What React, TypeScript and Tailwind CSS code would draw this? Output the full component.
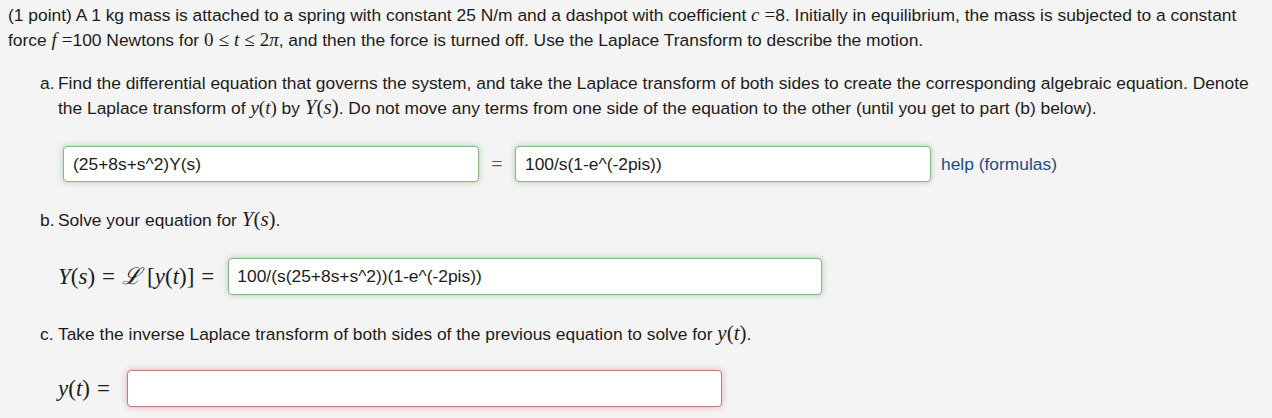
import React from "react";

const serif = '"Liberation Serif", "DejaVu Serif", serif';

const M = ({ children, size = 19 }: { children: React.ReactNode; size?: number }) => (
  <span className="leading-none whitespace-nowrap" style={{ fontFamily: serif, fontSize: size }}>
    {children}
  </span>
);
const I = ({ children }: { children: React.ReactNode }) => <i className="italic">{children}</i>;
const R = ({ children }: { children: React.ReactNode }) => <span className="mx-[5px]">{children}</span>;
const R6 = ({ children }: { children: React.ReactNode }) => <span className="mx-[7px]">{children}</span>;

const inputGreen =
  "h-[36px] bg-white border border-[#84b884] rounded-[4px] shadow-[0_0_6px_rgba(80,160,80,0.45)] flex items-center";

export default function App() {
  return (
    <div
      className="w-[1272px] h-[418px] bg-[#f4f4f4] text-[#1c1c1c] text-[17.4px] leading-[24.5px] overflow-hidden"
      style={{ fontFamily: '"Liberation Sans", Arial, sans-serif' }}
    >
      <div className="pl-[8px] pt-[3px] pr-[10px]">
        <p>
          (1 point) A 1 kg mass is attached to a spring with constant 25 N/m and a dashpot with coefficient{" "}
          <M>
            <I>c</I>
            <span className="ml-[5px]">=</span>
          </M>
          8. Initially in equilibrium, the mass is subjected to a constant force{" "}
          <M>
            <I>f</I>
            <span className="ml-[5px]">=</span>
          </M>
          100 Newtons for{" "}
          <M>
            0<R>≤</R>
            <I>t</I>
            <R>≤</R>2<I>π</I>
          </M>
          , and then the force is turned off. Use the Laplace Transform to describe the motion.
        </p>
      </div>

      <div className="pl-[40px] mt-[19px] pr-[10px]">
        <div className="flex">
          <span className="w-[18px] shrink-0">a.</span>
          <p>
            Find the differential equation that governs the system, and take the Laplace transform of both sides to
            create the corresponding algebraic equation. Denote the Laplace transform of{" "}
            <M>
              <I>y</I>(<I>t</I>)
            </M>{" "}
            by{" "}
            <M size={21}>
              <I>Y</I>(<I>s</I>)
            </M>
            . Do not move any terms from one side of the equation to the other (until you get to part (b) below).
          </p>
        </div>

        <div className="flex items-center mt-[26px] pl-[23px]">
          <div className={`w-[416px] pl-[9px] ${inputGreen}`}>(25+8s+s^2)Y(s)</div>
          <span className="w-[36px] text-center text-[20px] text-[#555]" style={{ fontFamily: serif }}>
            =
          </span>
          <div className={`w-[416px] pl-[9px] ${inputGreen}`}>100/s(1-e^(-2pis))</div>
          <span className="ml-[10px] text-[#1f4a87]">help (formulas)</span>
        </div>

        <div className="flex mt-[26px]">
          <span className="w-[18px] shrink-0">b.</span>
          <p>
            Solve your equation for{" "}
            <M size={21}>
              <I>Y</I>(<I>s</I>)
            </M>
            .
          </p>
        </div>

        <div className="flex items-center mt-[25px] pl-[18px]">
          <M size={23}>
            <I>Y</I>(<I>s</I>)<R6>=</R6>
            <span style={{ fontFamily: '"DejaVu Serif", serif' }} className="italic">
              ℒ
            </span>
            <span className="ml-[6px]">[</span>
            <I>y</I>(<I>t</I>)]<R6>=</R6>
          </M>
          <div className={`ml-[7px] w-[594px] h-[37px] pl-[8px] ${inputGreen}`}>100/(s(25+8s+s^2))(1-e^(-2pis))</div>
        </div>

        <div className="flex mt-[27px]">
          <span className="w-[18px] shrink-0">c.</span>
          <p>
            Take the inverse Laplace transform of both sides of the previous equation to solve for{" "}
            <M size={21}>
              <I>y</I>(<I>t</I>)
            </M>
            .
          </p>
        </div>

        <div className="flex items-center mt-[24px] pl-[18px]">
          <M size={23}>
            <I>y</I>(<I>t</I>)<R6>=</R6>
          </M>
          <div className="ml-[10px] w-[595px] h-[37px] bg-white border border-[#c47a7a] rounded-[4px] shadow-[0_0_6px_rgba(210,80,80,0.45)]" />
        </div>
      </div>
    </div>
  );
}
